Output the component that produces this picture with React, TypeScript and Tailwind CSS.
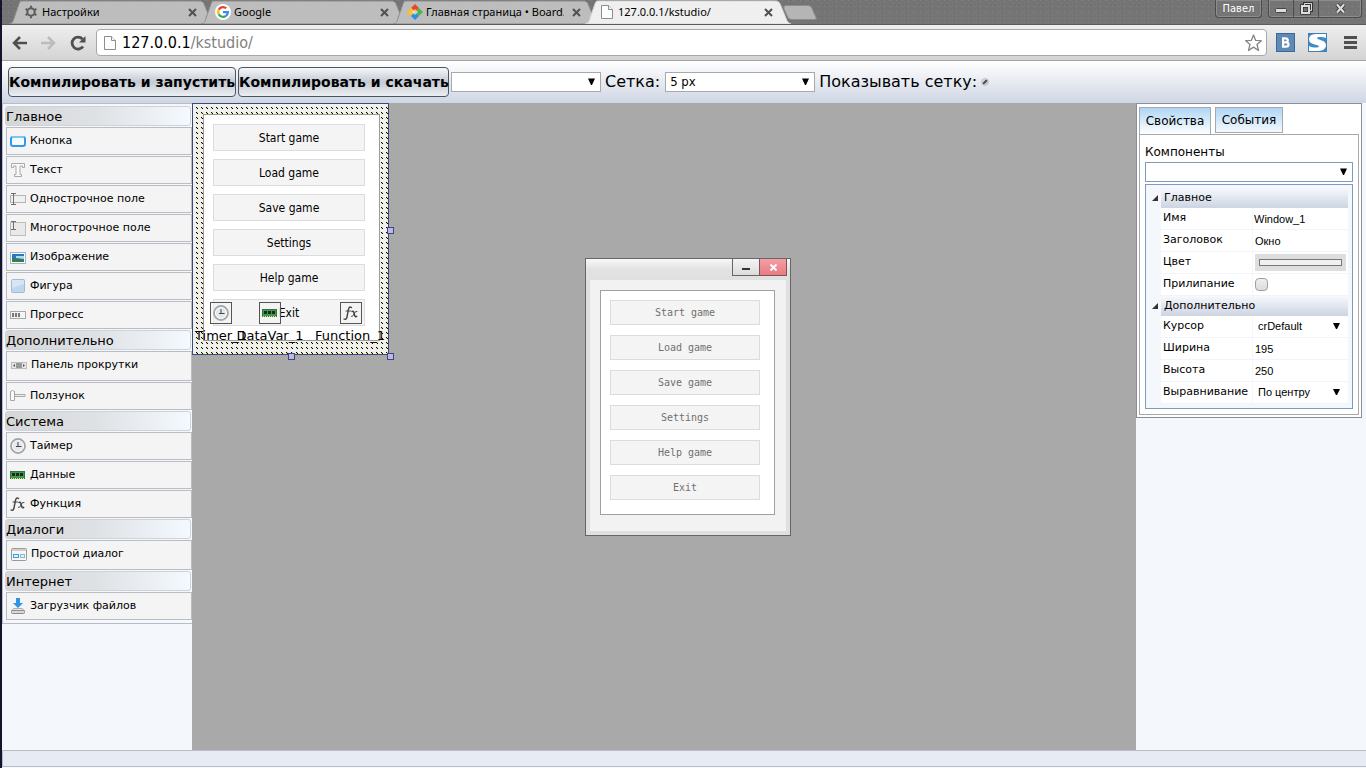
import type { ReactNode } from 'react';

const GAME_ITEMS = ['Start game', 'Load game', 'Save game', 'Settings', 'Help game', 'Exit'];

/* ---------- icons ---------- */

function ButtonIcon() {
  return (
    <svg width="16" height="16" viewBox="0 0 16 16">
      <rect x="1" y="4" width="14" height="9" rx="2" fill="#f4faff" stroke="#2f9be8" strokeWidth="2" />
      <path d="M2 4h12" stroke="#7cc6f7" strokeWidth="2" />
    </svg>
  );
}

function TextIcon() {
  return (
    <svg width="16" height="16" viewBox="0 0 16 16">
      <path d="M1.500 1.500h13v4h-2v-1.500h-2.500v8.500h1.500v2h-7v-2h1.500v-8.500h-2.500v1.500h-2z" fill="#fafafa" stroke="#a9a9a9" />
    </svg>
  );
}

function LineFieldIcon() {
  return (
    <svg width="16" height="16" viewBox="0 0 16 16">
      <rect x="0.500" y="4.500" width="15" height="7" fill="#f0f0f0" stroke="#b4b4b4" />
      <path d="M1 2.500h5M3.500 2.500v11M1 13.500h5" stroke="#707070" fill="none" />
    </svg>
  );
}

function AreaFieldIcon() {
  return (
    <svg width="16" height="16" viewBox="0 0 16 16">
      <rect x="0.500" y="2.500" width="15" height="13" fill="#e9e9e9" stroke="#bdbdbd" />
      <path d="M1 1.500h5M3.500 1.500v8M1 9.500h5" stroke="#707070" fill="none" />
    </svg>
  );
}

function ImageIcon() {
  return (
    <svg width="16" height="16" viewBox="0 0 16 16">
      <rect x="0.500" y="3.500" width="15" height="11" fill="#fff" stroke="#9fb4c4" />
      <rect x="2" y="5" width="12" height="8" fill="#2a78c0" />
      <path d="M6 7h8v3c-3 0-5-1-8-1z" fill="#a9dcf5" />
      <path d="M2 9c4 0 7 2 12 1v3H2z" fill="#3c7b4e" />
    </svg>
  );
}

function ShapeIcon() {
  return (
    <svg width="16" height="16" viewBox="0 0 16 16">
      <rect x="1.500" y="1.500" width="13" height="13" rx="1" fill="#d6e6f5" stroke="#9dbbdb" />
      <path d="M2 10l12-4v8H2z" fill="#bfd6ec" />
    </svg>
  );
}

function ProgressIcon() {
  return (
    <svg width="16" height="16" viewBox="0 0 16 16">
      <rect x="0.500" y="4.500" width="15" height="7" fill="#f4f4f4" stroke="#a8a8a8" />
      <path d="M3 6v4M6 6v4M9 6v4" stroke="#777" strokeWidth="2" />
    </svg>
  );
}

function ScrollIcon() {
  return (
    <svg width="16" height="16" viewBox="0 0 16 16">
      <rect x="0.500" y="5.500" width="15" height="6" fill="#e6e6e6" stroke="#bdbdbd" />
      <path d="M4 7v3L2 8.500zM12 7v3l2-1.500z" fill="#555" />
      <rect x="5" y="6" width="6" height="5" fill="#999" />
    </svg>
  );
}

function SliderIcon() {
  return (
    <svg width="16" height="16" viewBox="0 0 16 16">
      <path d="M5 6.500h10v2H5" fill="#eee" stroke="#aaa" />
      <path d="M.5 3.500l2-1 2 1v9h-4z" fill="#fafafa" stroke="#a5a5a5" />
    </svg>
  );
}

function ClockIcon() {
  return (
    <svg width="16" height="16" viewBox="0 0 16 16">
      <circle cx="8" cy="8" r="7" fill="#e4e8f1" stroke="#a6a6a6" strokeWidth="1.800" />
      <circle cx="8" cy="8" r="5.500" fill="none" stroke="#fff" strokeWidth="0.800" />
      <path d="M8 4v4.500M6 8.500h5.500" stroke="#444" fill="none" />
    </svg>
  );
}

function DataIcon() {
  return (
    <svg width="16" height="16" viewBox="0 0 16 16">
      <rect x="0.500" y="4.500" width="14" height="7" fill="#3f9b46" stroke="#2c7a34" />
      <path d="M2 6h3v3H2zM6 6h3v3H6zM10 6h3v3h-3z" fill="#22252a" />
      <path d="M1 11.500h14" stroke="#dfe58a" strokeDasharray="1 1" />
    </svg>
  );
}

function FxIcon() {
  return (
    <svg width="16" height="16" viewBox="0 0 16 16" fill="none" stroke="#444" strokeLinecap="round">
      <path d="M8.500 2.500c-2-1.300-2.800.3-3.200 2.500L4 12c-.4 2-1.500 2.800-3 2" strokeWidth="1.400" />
      <path d="M3 6h4.500" />
      <path d="M9 6.500c1.500-.8 1.900.3 2.300 2.500s.9 3.300 2.400 2.300" strokeWidth="1.500" />
      <path d="M14 6.500c-1.800-.4-2.600 1.300-3.200 2.700s-1 2.400-2.300 2.200" />
    </svg>
  );
}

function DialogIcon() {
  return (
    <svg width="16" height="16" viewBox="0 0 16 16">
      <rect x="0.500" y="2.500" width="15" height="12" rx="1" fill="#f7f7f7" stroke="#9a9a9a" />
      <path d="M1 4h14" stroke="#cfcfcf" strokeWidth="2" />
      <rect x="2.500" y="8.500" width="5" height="3" fill="#dff1ff" stroke="#3aa0e6" />
      <rect x="9.500" y="8.500" width="4" height="3" fill="#eee" stroke="#8fb6cf" />
    </svg>
  );
}

function DownloadIcon() {
  return (
    <svg width="16" height="16" viewBox="0 0 16 16">
      <path d="M6 0h4v5h3L8 10 3 5h3z" fill="#2f95e0" />
      <path d="M3.500 10.500h9l2 2.500h-13z" fill="#e6e6e6" stroke="#b0b0b0" />
      <rect x="1.500" y="12.500" width="13" height="3" rx="1" fill="#d8d8d8" stroke="#8c8c8c" />
    </svg>
  );
}

function PageIcon() {
  return (
    <svg width="12" height="16" viewBox="0 0 12 16" fill="#fdfdfd" stroke="#8d8d8d">
      <path d="M0.500 1.500h7l4 4v9h-11z" />
      <path d="M7.500 1.500v4h4" />
    </svg>
  );
}

function GearIcon() {
  return (
    <svg width="14" height="14" viewBox="0 0 14 14" fill="none" stroke="#5a5a5a">
      <circle cx="7" cy="7" r="3.700" strokeWidth="2" />
      <path d="M7 .8v2M7 11.200v2M1.600 3.900l1.700 1M10.700 9.100l1.700 1M1.600 10.100l1.700-1M10.700 4.900l1.700-1" strokeWidth="2" />
    </svg>
  );
}

function GoogleIcon() {
  return (
    <svg width="16" height="16" viewBox="0 0 16 16" fill="none" strokeWidth="2.200">
      <circle cx="8" cy="8" r="8" fill="#fff" />
      <path d="M11.300 4.300A4.900 4.900 0 0 0 3.700 5.700" stroke="#ea4335" />
      <path d="M3.700 5.700a4.900 4.900 0 0 0 0 4.600" stroke="#fbbc05" />
      <path d="M3.700 10.300a4.900 4.900 0 0 0 7.300 1.500" stroke="#34a853" />
      <path d="M11 11.800a4.900 4.900 0 0 0 1.900-3.600H8" stroke="#4285f4" />
    </svg>
  );
}

function BoardIcon() {
  return (
    <svg width="16" height="16" viewBox="0 0 16 16">
      <path d="M8 0l4 4-4 4-4-4z" fill="#e8472b" />
      <path d="M4 4l4 4-4 4-4-4z" fill="#f5a623" />
      <path d="M12 4l4 4-4 4-4-4z" fill="#4cb648" />
      <path d="M4 4l4 4-4 4-4-4z" fill="#f7c52e" />
      <path d="M8 8l4 4-4 4-4-4z" fill="#2a8fe0" />
      <path d="M8 5l3 3-3 3-3-3z" fill="#fff" fillOpacity="0.600" />
    </svg>
  );
}

function Arrow() {
  return (
    <svg className="pointer-events-none absolute right-[6px] top-1/2 -mt-1" width="7" height="7" viewBox="0 0 7 7">
      <path d="M0 .5h7L4 7H3z" fill="#000" />
    </svg>
  );
}

/* ---------- browser frame ---------- */

type TabProps = { icon: ReactNode; title: string; active?: boolean };

function BrowserTab({ icon, title, active }: TabProps) {
  return (
    <div className={`relative -ml-[14px] h-6 w-[206px] ${active ? 'z-10' : ''}`}>
      <svg className="absolute inset-0 h-full w-full" viewBox="0 0 206 25" preserveAspectRatio="none">
        <path
          d="M0 25C4 24 4 22 5 19L10 4c1-3 2-3 4-3h176c3 0 4 1 5 3l6 15c1 3 2 5 5 6z"
          fill={active ? '#efefef' : '#bdbdbd'}
          stroke={active ? '#d5d5d5' : '#8a8a8a'}
        />
      </svg>
      <div className="relative flex h-full items-center pl-[14px] pr-[18px]">
        <span className="flex w-4 shrink-0 justify-center">{icon}</span>
        <a href="#" className="ml-[3px] flex-1 overflow-hidden whitespace-nowrap font-['Noto_Sans','DejaVu_Sans',sans-serif] text-[11px] leading-4 text-black">
          {title}
        </a>
        <button type="button" aria-label="Закрыть" className="ml-2">
          <svg width="9" height="9" viewBox="0 0 9 9" stroke="#505050" strokeWidth="2">
            <path d="M1 1l7 7M8 1L1 8" />
          </svg>
        </button>
      </div>
    </div>
  );
}

function TabStrip() {
  return (
    <div className="flex h-[25px] items-end justify-start border-b border-[#5c5c5c] bg-[#757575] bg-[conic-gradient(from_270deg_at_1px_1px,#838383_90deg,transparent_0),conic-gradient(from_270deg_at_1px_1px,#6a6a6a_90deg,transparent_0)] bg-[size:6px_6px,4px_4px] pl-[21px]">
      <BrowserTab icon={<GearIcon />} title="Настройки" />
      <BrowserTab icon={<GoogleIcon />} title="Google" />
      <BrowserTab icon={<BoardIcon />} title="Главная страница • Board.K" />
      <BrowserTab icon={<PageIcon />} title="127.0.0.1/kstudio/" active />
      <button type="button" aria-label="Новая вкладка" className="-ml-2 mb-[3px]">
        <svg width="34" height="16" viewBox="0 0 34 16">
          <path d="M3 .5h22q3 0 4 3l4 9q1 2-2 2H9q-3 0-4-2L1 4Q0 .5 3 .5z" fill="#b5b5b5" stroke="#8d8d8d" />
        </svg>
      </button>
      <div className="ml-auto mr-1 flex gap-[6px] self-start">
        <button type="button" className="h-[18px] w-[47px] rounded-b border border-t-0 border-[#4c4c4c] font-['DejaVu_Sans_Condensed','DejaVu_Sans',sans-serif] text-[11px] leading-4 text-white shadow-[inset_0_0_0_1px_#8c8c8c]">
          Павел
        </button>
        <div className="flex h-[18px] rounded-b border border-t-0 border-[#4c4c4c] shadow-[inset_0_0_0_1px_#8c8c8c]">
          <button type="button" aria-label="Свернуть" className="flex w-[25px] items-center justify-center border-r border-[#4c4c4c]">
            <svg width="12" height="12" viewBox="0 0 12 12">
              <rect x="0.500" y="5.500" width="11" height="4" rx="1" fill="#ddd" stroke="#444" />
            </svg>
          </button>
          <button type="button" aria-label="Развернуть" className="flex w-[25px] items-center justify-center border-r border-[#4c4c4c]">
            <svg width="13" height="13" viewBox="0 0 13 13" fill="none">
              <path d="M4.500 3V1.500h7v7H10" stroke="#333" strokeWidth="3" />
              <rect x="2" y="4" width="7" height="7" stroke="#333" strokeWidth="3.500" />
              <path d="M4.500 3V1.500h7v7H10" stroke="#ddd" />
              <rect x="2" y="4" width="7" height="7" stroke="#ddd" strokeWidth="2" />
            </svg>
          </button>
          <button type="button" aria-label="Закрыть окно" className="flex w-[42px] items-center justify-center">
            <svg width="11" height="11" viewBox="0 0 11 11">
              <path d="M2 1.500l7 8M9 1.500l-7 8" stroke="#333" strokeWidth="4" />
              <path d="M2 1.500l7 8M9 1.500l-7 8" stroke="#ddd" strokeWidth="2.200" />
            </svg>
          </button>
        </div>
      </div>
    </div>
  );
}

function AddressBar() {
  return (
    <div className="flex h-9 items-center border-b border-[#a3a3a3] bg-gradient-to-b from-[#efefef] to-[#d4d4d4] pl-[10px] pr-[9px]">
      <button type="button" aria-label="Назад">
        <svg width="15" height="14" viewBox="0 0 15 14" fill="none" stroke="#505050" strokeWidth="2.500">
          <path d="M15 7H2M8 1L2 7l6 6" />
        </svg>
      </button>
      <button type="button" aria-label="Вперёд" className="ml-[14px]">
        <svg width="15" height="14" viewBox="0 0 15 14" fill="none" stroke="#bcbcbc" strokeWidth="2.500">
          <path d="M0 7h13M7 1l6 6-6 6" />
        </svg>
      </button>
      <button type="button" aria-label="Обновить" className="ml-[14px]">
        <svg width="16" height="16" viewBox="0 0 16 16" fill="none" stroke="#505050" strokeWidth="2.800">
          <path d="M13 11.500A6 6 0 1 1 12.500 4" />
          <path d="M15.500 1v6.500H9z" fill="#505050" stroke="none" />
        </svg>
      </button>
      <div className="ml-[10px] flex h-[27px] flex-1 items-center rounded-sm border border-[#a8a8a8] bg-white pl-[7px] pr-1">
        <PageIcon />
        <div className="ml-[6px] flex-1 font-['DejaVu_Sans_Condensed','DejaVu_Sans',sans-serif] text-base leading-5 text-black">
          127.0.0.1<span className="text-[#808080]">/kstudio/</span>
        </div>
        <button type="button" aria-label="Добавить в закладки">
          <svg width="17" height="18" viewBox="0 0 17 18" fill="#fff" stroke="#858585" strokeWidth="1.300" strokeLinejoin="round">
            <path d="M8.500 1l2.200 5.400 5.600.3-4.300 3.800 1.500 6-5-3.400-5 3.400 1.500-6L.7 6.700l5.600-.3z" />
          </svg>
        </button>
      </div>
      <button type="button" aria-label="ВКонтакте" className="ml-[9px] flex size-[19px] items-center justify-center border border-[#3c679e] bg-[#6189b5]">
        <svg width="9" height="11" viewBox="0 0 9 11" fill="none" stroke="#fff" strokeWidth="2.200">
          <path d="M1 1.300h3.500q2.300 0 2.300 2T4.500 5.300H2M2 5.300h3q2.500 0 2.500 2.200T5 9.700H1M2.100 1v9" />
        </svg>
      </button>
      <button type="button" aria-label="S" className="ml-[13px]">
        <svg width="19" height="19" viewBox="0 0 19 19">
          <rect x="0.500" y="0.500" width="18" height="18" fill="#3f8dc8" stroke="#3f7fb5" />
          <path d="M18 1v4C15 4 10 3.500 9 5c0 2 9 2 9 7 0 5-5 6-9 6H1v-5c4 2 9 2 10 .5 0-2-10-1.500-10-7C1 2 5 1 9 1z" fill="#fff" />
        </svg>
      </button>
      <button type="button" aria-label="Меню" className="ml-[17px]">
        <svg width="13" height="13" viewBox="0 0 13 13" fill="#505050">
          <path d="M0 0h13v3H0zM0 5h13v3H0zM0 10h13v3H0z" />
        </svg>
      </button>
    </div>
  );
}

/* ---------- studio ---------- */

function Toolbar() {
  const compile =
    'h-[30px] rounded-sm border border-[#4a5560] bg-gradient-to-b from-[#f6f7f9] via-[#c3cad3] to-[#eceff2] text-sm font-bold whitespace-nowrap';
  return (
    <div className="flex h-[42px] items-center bg-gradient-to-b from-white to-[#cfd6e4] pl-[6px] text-base text-black">
      <button type="button" className={`${compile} w-[228px]`}>Компилировать и запустить</button>
      <button type="button" className={`${compile} ml-[2px] w-[211px]`}>Компилировать и скачать</button>
      <span className="relative ml-[2px] w-[150px]">
        <select aria-label="Форма" className="block h-5 w-full appearance-none border border-[#a9a9a9] bg-white" />
        <Arrow />
      </span>
      <label htmlFor="grid" className="ml-1">Сетка:</label>
      <span className="relative ml-[5px] w-[150px]">
        <select id="grid" className="block h-5 w-full appearance-none border border-[#a9a9a9] bg-white pl-1 font-['DejaVu_Sans_Condensed','DejaVu_Sans',sans-serif] text-[13px] leading-4">
          <option>5 px</option>
        </select>
        <Arrow />
      </span>
      <label htmlFor="show-grid" className="ml-1">Показывать сетку:</label>
      <input
        id="show-grid"
        type="checkbox"
        defaultChecked
        className="ml-[5px] size-[6px] appearance-none rounded-full bg-[#c4c4c4] outline outline-[#c4c4c4] checked:bg-[linear-gradient(135deg,#d0d0d0_35%,#555_35%,#555_60%,#c4c4c4_60%)]"
      />
    </div>
  );
}

const PALETTE: { title: string; items: { label: string; icon: ReactNode; tall?: boolean }[] }[] = [
  {
    title: 'Главное',
    items: [
      { label: 'Кнопка', icon: <ButtonIcon /> },
      { label: 'Текст', icon: <TextIcon /> },
      { label: 'Однострочное поле', icon: <LineFieldIcon /> },
      { label: 'Многострочное поле', icon: <AreaFieldIcon /> },
      { label: 'Изображение', icon: <ImageIcon /> },
      { label: 'Фигура', icon: <ShapeIcon /> },
      { label: 'Прогресс', icon: <ProgressIcon /> },
    ],
  },
  {
    title: 'Дополнительно',
    items: [
      { label: 'Панель прокрутки', icon: <ScrollIcon />, tall: true },
      { label: 'Ползунок', icon: <SliderIcon /> },
    ],
  },
  {
    title: 'Система',
    items: [
      { label: 'Таймер', icon: <ClockIcon /> },
      { label: 'Данные', icon: <DataIcon /> },
      { label: 'Функция', icon: <FxIcon /> },
    ],
  },
  { title: 'Диалоги', items: [{ label: 'Простой диалог', icon: <DialogIcon />, tall: true }] },
  { title: 'Интернет', items: [{ label: 'Загрузчик файлов', icon: <DownloadIcon /> }] },
];

function Palette() {
  return (
    <aside className="w-[190px] shrink-0 bg-[#f4f8fd]">
      <div className="border border-r-0 border-[#b9bcc4] pb-[2px] pl-[2px] pt-[2px]">
        {PALETTE.map((group) => (
          <section key={group.title}>
            <h2 className="mb-px mr-px h-5 rounded-[3px] border border-[#cdd3d8] bg-gradient-to-r from-[#d6d6d6] via-[#dfe2e5] to-[#f4f9ff] text-[13px] leading-5 text-black">
              {group.title}
            </h2>
            {group.items.map((item) => (
              <button
                type="button"
                key={item.label}
                className={`mb-px ml-px flex w-[186px] gap-1 border border-[#b9bcc0] bg-[#f4f4f4] text-left text-[11px] text-black ${
                  item.tall ? 'h-[30px] pl-1' : 'h-7 pl-[3px]'
                }`}
              >
                <span className="mt-[5px]">{item.icon}</span>
                <span className="mt-1 leading-[18px]">{item.label}</span>
              </button>
            ))}
          </section>
        ))}
      </div>
    </aside>
  );
}

function Designer() {
  const chip = 'absolute flex size-[22px] items-center justify-center border border-[#555] bg-[#f4f4f4]/60';
  const tag = 'absolute w-20 text-center text-[13px] leading-4 text-black';
  const handle = 'absolute size-[7px] border border-[#44447c] bg-[#b9b9ec]';
  return (
    <div className="absolute left-0 top-0 w-[197px] border border-[#3b4a7a] bg-[#f0f0f0] bg-[conic-gradient(from_270deg_at_1px_1px,#000_90deg,transparent_0),conic-gradient(from_270deg_at_1px_1px,#000_90deg,transparent_0),conic-gradient(from_270deg_at_2px_2px,#e4e67a_90deg,transparent_0)] bg-[size:5px_5px] bg-[position:3px_3px,4px_4px,3px_3px] pb-[13px] pl-[10px] pr-2 pt-[10px]">
      <div className="flex flex-col gap-2 border border-[#9a9a9a] bg-white pb-[14px] pl-[9px] pr-[14px] pt-[9px]">
        {GAME_ITEMS.map((label) => (
          <button
            type="button"
            key={label}
            className="h-[27px] border border-[#dcdcdc] bg-[#f4f4f4] pt-px font-['DejaVu_Sans_Condensed','DejaVu_Sans',sans-serif] text-xs text-black"
          >
            {label}
          </button>
        ))}
      </div>
      <div className={`${chip} left-[17px] top-[198px]`}><ClockIcon /></div>
      <div className={`${chip} left-[66px] top-[198px]`}><DataIcon /></div>
      <div className={`${chip} left-[147px] top-[198px]`}><FxIcon /></div>
      <span className={`${tag} -left-3 top-[224px]`}>Timer_1</span>
      <span className={`${tag} left-[37px] top-[224px]`}>DataVar_1</span>
      <span className={`${tag} left-[117px] top-[224px]`}>Function_1</span>
      <span className={`${handle} -right-[6px] top-[123px]`} />
      <span className={`${handle} -bottom-[6px] left-[95px]`} />
      <span className={`${handle} -bottom-[6px] -right-[6px]`} />
    </div>
  );
}

function GameWindow() {
  return (
    <div className="absolute left-[393px] top-[155px] w-[206px] border border-[#666] bg-[#e0e0e0] px-1 pb-1">
      <div className="-mx-1 flex h-[21px] items-start justify-end bg-gradient-to-b from-[#f8f8f8] via-[#e2e2e2] to-[#e0e0e0] pr-[3px]">
        <button type="button" aria-label="Свернуть" className="flex h-[17px] w-7 items-end justify-center border border-t-0 border-[#666] bg-gradient-to-b from-[#f4f4f4] to-[#dcdcdc] pb-[5px]">
          <span className="h-[2px] w-2 bg-[#333]" />
        </button>
        <button type="button" aria-label="Закрыть" className="-ml-px flex h-[17px] w-7 items-center justify-center border border-t-0 border-[#7d5558] bg-gradient-to-b from-[#f4a0a6] to-[#ea7a82]">
          <svg width="7" height="7" viewBox="0 0 7 7" stroke="#fff" strokeWidth="2">
            <path d="M.5.5l6 6M6.500.5l-6 6" />
          </svg>
        </button>
      </div>
      <div className="bg-[#f2f2f2] pb-4 pl-[10px] pr-[11px] pt-[10px]">
        <div className="flex flex-col gap-[10px] border border-[#a0a0a0] bg-white pb-[14px] pl-[9px] pr-[14px] pt-[9px]">
          {GAME_ITEMS.map((label) => (
            <button type="button" key={label} className="h-[25px] border border-[#dcdcdc] bg-[#f4f4f4] font-['DejaVu_Sans_Mono',monospace] text-[10px] text-[#707070]">
              {label}
            </button>
          ))}
        </div>
      </div>
    </div>
  );
}

function PropSection({ title, children }: { title: string; children: ReactNode }) {
  return (
    <section>
      <h3 className="flex h-5 items-center text-[11px] text-black">
        <svg className="ml-[6px] mr-[3px] shrink-0" width="6" height="6" viewBox="0 0 6 6">
          <path d="M6 0v6H0z" fill="#333" />
        </svg>
        <span className="h-5 flex-1 bg-gradient-to-b from-[#f6f9fd] to-[#cdd4e2] pl-[3px] leading-5">{title}</span>
      </h3>
      <div className="ml-[15px]">{children}</div>
    </section>
  );
}

function PropRow({ id, label, children }: { id: string; label: string; children: ReactNode }) {
  return (
    <div className="flex h-[22px] gap-px border-b border-[#f0f5fb]">
      <label htmlFor={id} className="w-[91px] shrink-0 bg-white pl-[2px] text-[11px] leading-5 text-black">{label}</label>
      <div className="flex min-w-0 flex-1 items-center bg-white">{children}</div>
    </div>
  );
}

const FIELD = "h-5 w-full min-w-0 bg-transparent font-['Liberation_Sans',Arial,sans-serif] text-[11px] text-black";

function PropSelect({ id, value }: { id: string; value: string }) {
  return (
    <span className="relative w-full pr-[5px]">
      <select id={id} className={`${FIELD} block appearance-none pl-[5px]`}>
        <option>{value}</option>
      </select>
      <svg className="pointer-events-none absolute right-2 top-[6px]" width="7" height="6" viewBox="0 0 7 6">
        <path d="M0 0h7L4 6H3z" fill="#000" />
      </svg>
    </span>
  );
}

function Inspector() {
  return (
    <aside className="flex w-[230px] shrink-0 items-start bg-[#f4f8fd] pr-1">
      <div className="w-full border border-[#8c8c9c] bg-white px-[2px] pb-[2px] pt-[3px] text-black">
        <div className="flex items-start gap-1 text-xs">
          <button type="button" className="-mb-px h-[27px] w-[72px] border border-b-0 border-[#a9a9a9] bg-gradient-to-b from-[#aed6f4] to-white">Свойства</button>
          <button type="button" className="h-[26px] w-[68px] border border-[#a9a9a9] bg-gradient-to-b from-[#aed6f4] to-[#f4f9fe]">События</button>
        </div>
        <div className="mt-px border border-[#a9a9a9] p-[5px]">
          <label htmlFor="component" className="mt-[3px] block h-[19px] text-xs leading-[18px]">Компоненты</label>
          <span className="relative block">
            <select id="component" className="block h-5 w-full appearance-none border border-[#7f9db9] bg-white" />
            <Arrow />
          </span>
          <div className="mt-[2px] border border-[#7f9db9] bg-[#f4f8fd] pb-1 pr-1 pt-[3px]">
            <PropSection title="Главное">
              <PropRow id="name" label="Имя"><input id="name" defaultValue="Window_1" className={`${FIELD} pl-px`} /></PropRow>
              <PropRow id="caption" label="Заголовок"><input id="caption" defaultValue="Окно" className={`${FIELD} pl-[2px]`} /></PropRow>
              <PropRow id="color" label="Цвет">
                <button id="color" type="button" className="ml-[2px] mr-[2px] h-[17px] flex-1 bg-[#dedede] px-1 py-[5px]">
                  <span className="block h-[7px] border border-[#777] bg-[#f0f0f0]" />
                </button>
              </PropRow>
              <PropRow id="snap" label="Прилипание">
                <input id="snap" type="checkbox" className="ml-[2px] size-[13px] appearance-none rounded-sm border border-[#a0a0a0] bg-gradient-to-b from-[#eee] to-[#dcdcdc]" />
              </PropRow>
            </PropSection>
            <PropSection title="Дополнительно">
              <PropRow id="cursor" label="Курсор"><PropSelect id="cursor" value="crDefault" /></PropRow>
              <PropRow id="width" label="Ширина"><input id="width" defaultValue="195" className={`${FIELD} pl-[2px]`} /></PropRow>
              <PropRow id="height" label="Высота"><input id="height" defaultValue="250" className={`${FIELD} pl-[2px]`} /></PropRow>
              <PropRow id="align" label="Выравнивание"><PropSelect id="align" value="По центру" /></PropRow>
            </PropSection>
          </div>
        </div>
      </div>
    </aside>
  );
}

export default function App() {
  return (
    <div className="flex h-screen flex-col overflow-hidden border-l-2 border-[#14142c] bg-[#f4f8fd] font-['DejaVu_Sans',Verdana,sans-serif]">
      <TabStrip />
      <AddressBar />
      <Toolbar />
      <div className="flex min-h-0 flex-1">
        <Palette />
        <main className="relative min-w-0 flex-1 bg-[#a9a9a9]">
          <Designer />
          <GameWindow />
        </main>
        <Inspector />
      </div>
      <footer className="mb-px h-[17px] shrink-0 border border-r-0 border-[#b9bcc4] bg-[#e6ebf4]" />
    </div>
  );
}
